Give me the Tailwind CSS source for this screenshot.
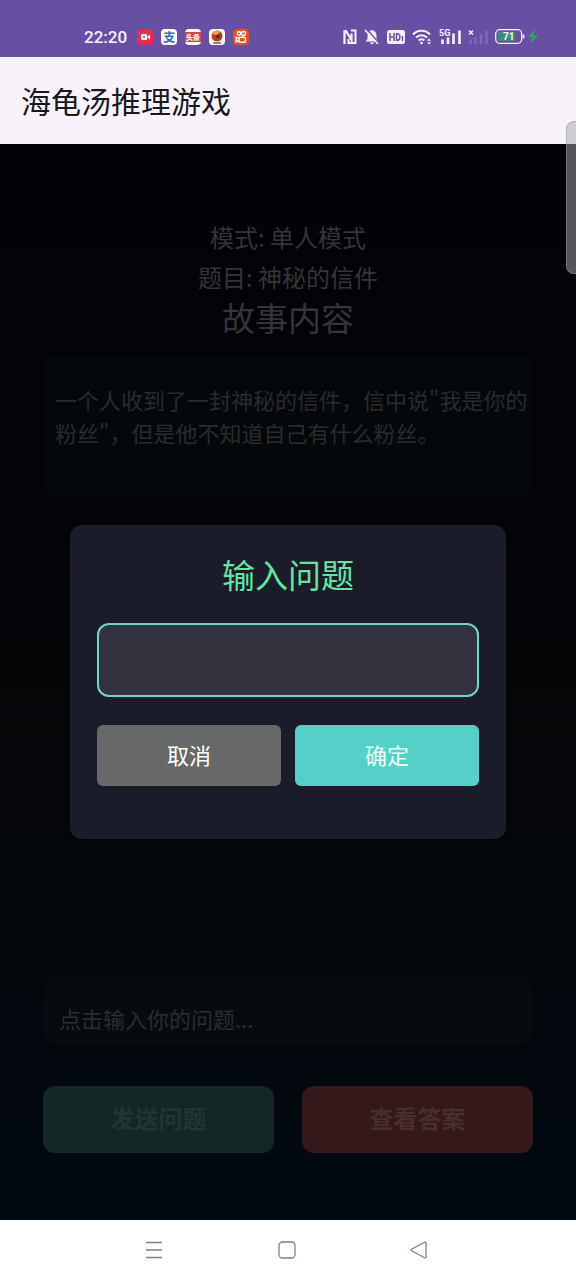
<!DOCTYPE html>
<html lang="zh-CN">
<head>
<meta charset="utf-8">
<meta name="viewport" content="width=device-width, initial-scale=1">
<title>海龟汤推理游戏</title>
<script src="https://cdn.jsdelivr.net/npm/@tailwindcss/browser@4"></script>
</head>
<body class="relative flex min-h-screen flex-col bg-black font-['Noto_Sans_CJK_SC',sans-serif]">

<!-- System status bar -->
<div class="flex h-[57px] items-center justify-between bg-[#6750a4] pt-4 pr-[38px] pl-[84px] text-[#f8efff]">
  <div class="flex items-center gap-2">
    <span class="mr-[2px] font-['Roboto',sans-serif] text-[17px] leading-5 font-medium">22:20</span>
    <svg class="size-4" viewBox="0 0 16 16" aria-hidden="true"><rect width="16" height="16" rx="4" fill="#e0304e"/><rect x="4" y="5" width="6" height="6" rx="1" fill="#fff"/><path d="M10 8l3-2.500v5z" fill="#fff"/><circle cx="7" cy="8" r="1" fill="#e0304e"/></svg>
    <span class="flex size-4 items-center justify-center rounded bg-white text-xs leading-4 font-bold text-[#2a6fb5]">支</span>
    <svg class="size-4" viewBox="0 0 16 16" aria-hidden="true"><rect width="16" height="16" rx="4" fill="#fff"/><rect y="3" width="16" height="10" fill="#ee3a45"/><text x="8" y="10.600" text-anchor="middle" font-size="7" font-weight="900" fill="#fff">头条</text></svg>
    <svg class="size-4" viewBox="0 0 16 16" aria-hidden="true"><rect width="16" height="16" rx="4" fill="#fff"/><circle cx="8" cy="7" r="5.500" fill="#b8401c"/><path d="M3 5.500a5.500 5.500 0 0 1 9-2.500c-2 0-3 3-5 3S4 5 3 5.500z" fill="#f0a040"/><circle cx="9" cy="7.500" r="2" fill="#6d1e10"/><path d="M4 14h8" stroke="#8a5a3c" stroke-width="1.500"/></svg>
    <svg class="size-4" viewBox="0 0 16 16" aria-hidden="true"><rect width="16" height="16" rx="4" fill="#e5501f"/><g fill="none" stroke="#fff" stroke-width="1.400"><circle cx="6" cy="4.500" r="1.700"/><circle cx="10.500" cy="4.500" r="2"/><rect x="6" y="8.200" width="6.500" height="5" rx="1.500"/><path d="M6 9.500L3.200 8.300v4.600L6 11.700"/></g></svg>
  </div>
  <div class="flex items-center gap-[7px]">
    <svg class="h-4 w-[14px]" viewBox="0 0 14 16" fill="none" stroke="currentColor" aria-hidden="true"><path d="M1.500 15V2H3l5.500 9V4.500" stroke-width="2.200"/><path d="M5.500 10v4H12.500V1.500H8" stroke-width="2"/></svg>
    <svg class="h-4 w-4" viewBox="0 0 16 16" aria-hidden="true"><path d="M8 1c-3 .5-4.500 3-4.500 6v3L1.500 12.500h13L12.500 10V7C12.500 4 11 1.500 8 1zM6 13.500h4c0 2.300-4 2.300-4 0z" fill="currentColor"/><path d="M2.500 0l13 14.500" stroke="#6750a4" stroke-width="1.500"/><path d="M1 1l13 14" stroke="currentColor" stroke-width="1.600"/></svg>
    <svg class="h-[14px] w-[18px]" viewBox="0 0 18 14" aria-hidden="true"><rect width="18" height="14" rx="2.500" fill="currentColor"/><g fill="none" stroke="#6750a4" stroke-width="1.500"><path d="M3 3v8M7 3v8M3 7h4M9.500 3.700v6.600h1c3.200 0 3.200-6.600 0-6.600zM15.500 6v5"/></g></svg>
    <svg class="h-4 w-5" viewBox="0 0 20 16" fill="none" stroke="currentColor" stroke-width="2" aria-hidden="true"><path d="M1 5.500c4.500-5 12.500-5 17 0M4 8.700c3-3.300 8-3.300 11 0M6.700 11.500c1.600-1.700 4-1.700 5.600 0"/><circle cx="9.500" cy="14" r="1.300" fill="currentColor" stroke="none"/><path d="M15 11.700l2-2.200 2 2.200zM15 13.300l2 2.200 2-2.200z" fill="currentColor" stroke="none"/></svg>
    <svg class="h-[18px] w-[22px]" viewBox="0 0 22 18" aria-hidden="true"><text x="0" y="7.500" font-size="9" font-weight="700" fill="currentColor" font-family="Roboto, sans-serif">5G</text><path d="M3.500 11.500V16M9 9.500V16M14.500 5.500V16M20.500 2.500V16" stroke="currentColor" stroke-width="2.600"/></svg>
    <svg class="h-[18px] w-[20px]" viewBox="0 0 20 18" aria-hidden="true"><path d="M1 2.500l4 4M5 2.500l-4 4" stroke="currentColor" stroke-width="1.400"/><path d="M2.500 11.500V16M7.500 9.500V16M13 6V16M18.500 2.500V16" stroke="#8069b8" stroke-width="2.400"/></svg>
    <svg class="h-[15px] w-[30px]" viewBox="0 0 30 15" aria-hidden="true"><rect x="3" y="3" width="17" height="9" rx="1" fill="#3f8c74"/><rect x=".7" y=".7" width="26" height="13.600" rx="4" fill="none" stroke="currentColor" stroke-width="1.300"/><path d="M28.500 5.500v4" stroke="currentColor" stroke-width="1.600"/><text x="13.700" y="11.200" text-anchor="middle" font-size="10" font-weight="700" fill="currentColor" font-family="Roboto, sans-serif">71</text></svg>
    <svg class="-ml-1 h-[15px] w-[10px]" viewBox="0 0 10 15" aria-hidden="true"><path d="M6.500 0L0 8h4l-1.500 7L10 6.500H5.500z" fill="#35a06a"/></svg>
  </div>
</div>

<!-- App bar -->
<header class="flex h-[87px] items-center bg-[#f8f3fb] px-[21px] pb-[2px]">
  <h1 class="text-[30px] leading-10 text-[#19181d]">海龟汤推理游戏</h1>
</header>

<main class="relative flex flex-1 flex-col bg-linear-to-b from-[#020208] via-[#040507] to-[#020911] px-[43px] pt-[73px] pb-[67px]">
  <div class="text-center text-2xl leading-10 text-[#343538]">
    <p>模式: 单人模式</p>
    <p>题目: 神秘的信件</p>
    <h2 class="text-[33px] leading-10">故事内容</h2>
  </div>
  <section class="mt-[18px] min-h-[140px] rounded-xl bg-[#05080a] py-7 pr-0 pl-3 text-[22px] leading-[33px] text-[#292b2d]">
    <p>一个人收到了一封神秘的信件，信中说"我是你的粉丝"，但是他不知道自己有什么粉丝。</p>
  </section>
  <form class="mt-auto">
    <input type="text" aria-label="你的问题" placeholder="点击输入你的问题..." class="block h-[69px] w-full rounded-xl bg-[#060b10] px-4 pt-[14px] text-[22px] text-[#2a2d31] placeholder:text-[#2a2d31]">
    <div class="mt-[41px] grid grid-cols-2 gap-7">
      <button type="button" class="h-[67px] rounded-xl bg-[#132725] pb-1 text-2xl font-bold text-[#213631]">发送问题</button>
      <button type="button" class="h-[67px] rounded-xl bg-[#35191a] pb-1 text-2xl font-bold text-[#482f2e]">查看答案</button>
    </div>
  </form>

  <!-- Question dialog -->
  <div class="absolute inset-0 flex items-center justify-center px-[70px]">
    <form role="dialog" aria-labelledby="dialog-title" class="w-full rounded-xl bg-[#1a1c2a] px-[27px] pt-[27px] pb-[53px]">
      <h2 id="dialog-title" class="text-center text-[33px] leading-[44px] text-[#62e6a0]"><label for="question">输入问题</label></h2>
      <input id="question" type="text" class="mt-[27px] block h-[74px] w-full rounded-xl border-2 border-[#6fd6cf] bg-[#31323e] px-4 text-[22px] text-white outline-none">
      <div class="mt-7 grid grid-cols-2 gap-[14px]">
        <button type="button" class="h-[61px] rounded-md bg-[#676968] pb-[2px] text-[22px] text-white">取消</button>
        <button type="button" class="h-[61px] rounded-md bg-[#55d0c8] pb-[2px] text-[22px] text-[#effffd]">确定</button>
      </div>
    </form>
  </div>
</main>

<!-- System navigation -->
<nav class="flex h-[60px] items-center justify-between bg-white pr-[147px] pl-[144px] text-[#7b8484]">
  <button type="button" aria-label="菜单"><svg class="size-5" viewBox="0 0 20 20" fill="none" stroke="currentColor" stroke-width="1.300"><path d="M2 2.500h16M2 10h16M2 17.500h16"/></svg></button>
  <button type="button" aria-label="主页"><svg class="size-5" viewBox="0 0 20 20" fill="none" stroke="currentColor" stroke-width="1.300"><rect x="2" y="2" width="16" height="16" rx="3.500"/></svg></button>
  <button type="button" aria-label="返回"><svg class="size-5" viewBox="0 0 20 20" fill="none" stroke="currentColor" stroke-width="1.300" stroke-linejoin="round"><path d="M2.500 9.200L15.500 2.300q1.500-.5 1.500 1V16.700q0 1.500-1.500 1L2.500 10.800q-1-.8 0-1.600z"/></svg></button>
</nav>

<!-- Edge sidebar handle -->
<div class="absolute top-[121px] right-0 h-[153px] w-[10px] rounded-l-lg border border-r-0 border-[#9a989c]/50 bg-[#a8aaaa]/50"></div>
</body>
</html>
